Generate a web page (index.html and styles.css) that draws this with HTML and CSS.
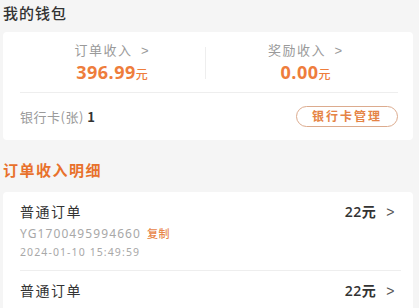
FILE: index.html
```html
<!DOCTYPE html>
<html lang="zh">
<head>
<meta charset="utf-8">
<link rel="stylesheet" href="styles.css">
</head>
<body>
<div class="page">
  <h1 class="title">我的钱包</h1>
  <section class="card wallet">
    <div class="stats">
      <div class="stat">
        <div class="stat-label">订单收入 <span class="chev">&gt;</span></div>
        <div class="stat-value">396.99<span class="unit">元</span></div>
      </div>
      <div class="vdiv"></div>
      <div class="stat">
        <div class="stat-label">奖励收入 <span class="chev">&gt;</span></div>
        <div class="stat-value">0.00<span class="unit">元</span></div>
      </div>
    </div>
    <div class="bank">
      <div class="bank-label">银行卡(张) <b>1</b></div>
      <button class="bank-btn">银行卡管理</button>
    </div>
  </section>
  <h2 class="section-title">订单收入明细</h2>
  <section class="card orders">
    <div class="order">
      <div class="order-top">
        <span class="order-name">普通订单</span>
        <span class="order-amount">22元 <span class="chev">&gt;</span></span>
      </div>
      <div class="order-no">YG1700495994660<span class="copy">复制</span></div>
      <div class="order-time">2024-01-10 15:49:59</div>
    </div>
    <div class="order">
      <div class="order-top">
        <span class="order-name">普通订单</span>
        <span class="order-amount">22元 <span class="chev">&gt;</span></span>
      </div>
    </div>
  </section>
</div>
</body>
</html>
```

FILE: styles.css
```css
* { box-sizing: border-box; }
html, body {
  margin: 0;
  padding: 0;
  background: #f5f5f5;
  font-family: "Noto Sans CJK SC", "Noto Sans", sans-serif;
  width: 419px;
  height: 308px;
  overflow: hidden;
}
.page {
  padding: 0 6px 0 3px;
}
.title {
  margin: 0;
  height: 32px;
  padding-top: 3px;
  font-size: 15px;
  font-weight: 500;
  letter-spacing: 1px;
  color: #333;
  line-height: 20px;
}
.card {
  background: #fff;
  border-radius: 4px;
}
.wallet {
  height: 108px;
  padding: 0 15px 0 17px;
}
.stats {
  display: flex;
  align-items: center;
  height: 61px;
  border-bottom: 1px solid #eeeeee;
  padding-top: 2px;
}
.stat {
  flex: 1;
  text-align: center;
}
.stat-label {
  font-size: 13px;
  letter-spacing: 1.5px;
  color: #9a9a9a;
  line-height: 18px;
}
.chev {
  font-family: "Liberation Sans", sans-serif;
  margin-left: 4px;
  color: #999;
}
.stat-value {
  margin-top: 1px;
  font-family: "Open Sans", "Noto Sans", sans-serif;
  font-weight: 700;
  font-size: 18px;
  color: #ee7d3c;
  line-height: 22px;
  letter-spacing: 0.5px;
}
.unit {
  font-family: "Noto Sans CJK SC", sans-serif;
  font-size: 12px;
  font-weight: 500;
}
.vdiv {
  width: 1px;
  height: 32px;
  margin-right: 8px;
  background: #eeeeee;
}
.bank {
  display: flex;
  justify-content: space-between;
  align-items: center;
  height: 46px;
}
.bank-label {
  font-size: 13px;
  color: #9a9a9a;
  letter-spacing: 0.5px;
}
.bank-label b {
  color: #333;
  font-weight: 700;
}
.bank-btn {
  width: 102px;
  height: 21px;
  border: 1.5px solid #dcab8e;
  border-radius: 11px;
  background: #fff;
  color: #e58445;
  font-family: "Noto Sans CJK SC", sans-serif;
  font-size: 12px;
  font-weight: 700;
  letter-spacing: 2px;
  padding: 0;
  line-height: 18px;
}
.section-title {
  margin: 0;
  height: 52px;
  padding-top: 20px;
  font-size: 15px;
  font-weight: 700;
  letter-spacing: 1.5px;
  color: #e8712c;
  line-height: 20px;
}
.orders {
  padding: 0 12px 0 17px;
  height: 120px;
}
.order {
  border-bottom: 1px solid #eeeeee;
  padding-top: 9px;
}
.order:last-child { border-bottom: none; }
.order-top {
  display: flex;
  justify-content: space-between;
  align-items: center;
  height: 20px;
  padding-right: 6px;
}
.order-name {
  font-size: 14px;
  color: #333;
  letter-spacing: 1.5px;
}
.order-amount {
  font-family: "Open Sans", "Noto Sans CJK SC", sans-serif;
  font-size: 14px;
  color: #333;
  font-weight: 600;
  letter-spacing: 0.5px;
}
.order-amount .chev { color: #555; margin-left: 6px; font-weight: 400; }
.order-no {
  margin-top: 3px;
  font-family: "Noto Sans", "Noto Sans CJK SC", sans-serif;
  font-size: 12px;
  color: #a8a8a8;
  letter-spacing: 1.1px;
  line-height: 18px;
}
.copy {
  font-family: "Noto Sans CJK SC", sans-serif;
  color: #e8874a;
  margin-left: 6px;
  font-size: 11px;
  font-weight: 500;
  letter-spacing: 0.5px;
}
.order-time {
  font-family: "Noto Sans", "Noto Sans CJK SC", sans-serif;
  font-size: 10.5px;
  color: #a8a8a8;
  letter-spacing: 1.1px;
  line-height: 18px;
  padding-bottom: 9px;
}
```
